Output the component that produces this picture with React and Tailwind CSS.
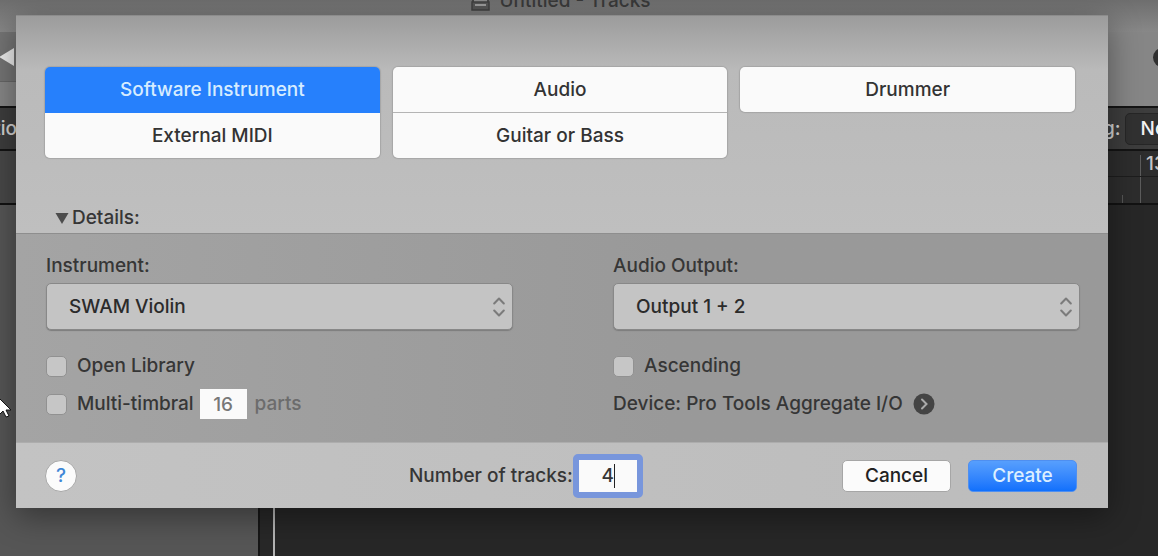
import { useState } from "react";

const trackTypes = [
  ["Software Instrument", "External MIDI"],
  ["Audio", "Guitar or Bass"],
  ["Drummer"],
];

function TypeButton({ label, selected, first, last, onSelect }) {
  const tone = selected
    ? "bg-[#2680fc] text-[#d6ecff]"
    : "bg-[#fafafa] text-[#333333]";
  const height = first && !last ? "h-[46px]" : "h-[45px]";
  const edge = `${first ? "rounded-t-[5px]" : ""} ${last ? "rounded-b-[5px]" : ""} ${
    first && !last && !selected ? "border-b border-[#b4b4b4]" : ""
  }`;
  return (
    <button
      type="button"
      aria-pressed={selected}
      onClick={onSelect}
      className={`block w-full ${height} ${tone} ${edge}`}
    >
      {label}
    </button>
  );
}

function Popup({ id, label, value }) {
  return (
    <div className="flex flex-col">
      <label htmlFor={id} className="h-6 leading-6">
        {label}
      </label>
      <div className="relative mt-[5px]">
        <select
          id={id}
          defaultValue={value}
          className="h-[47px] w-full appearance-none rounded-[5px] border border-[#888888] bg-[#c4c4c4] px-[22px] text-[#2b2b2b] shadow-[0_1px_1px_#7d7d7d] outline-none"
        >
          <option>{value}</option>
        </select>
        <svg
          className="pointer-events-none absolute right-2 top-[14px] h-5 w-3"
          viewBox="0 0 12 20"
          fill="none"
          stroke="#7b7b7b"
          strokeWidth="2"
          strokeLinecap="round"
          strokeLinejoin="round"
        >
          <path d="M1.2 6.5 6 1.5l4.800 5M1.200 13.500 6 18.500l4.800-5" />
        </svg>
      </div>
    </div>
  );
}

function Check({ id, label }) {
  return (
    <div className="flex items-center">
      <input
        id={id}
        type="checkbox"
        className="h-[21px] w-[21px] appearance-none rounded-[5px] border border-[#919191] bg-[#c6c6c6] checked:bg-[#2680fc]"
      />
      <label htmlFor={id} className="ml-[10px]">
        {label}
      </label>
    </div>
  );
}

function Backdrop() {
  return (
    <div aria-hidden="true" className="absolute inset-0 flex flex-col overflow-hidden whitespace-nowrap">
      <div className="flex h-8 shrink-0 justify-center bg-linear-to-b from-[#6e6e6e] to-[#888888] pr-9">
        <div className="-mt-[11px] flex h-6 items-center gap-[9px] leading-6 text-[#393939]">
          <svg className="h-[20px] w-[19px]" viewBox="0 0 19 20">
            <path d="M2 -2h15v14H2z" fill="#8a8a8a" stroke="#444" strokeWidth="2" />
            <path d="M1 11h17v8H1z" fill="#555" stroke="#404040" strokeWidth="1.500" />
            <path d="M4 14h11" stroke="#9a9a9a" strokeWidth="2" />
          </svg>
          <span>Untitled - Tracks</span>
        </div>
      </div>
      <div className="flex h-[74px] shrink-0 justify-between bg-[#868686]">
        <div className="flex h-[50px] w-8 items-center border-b border-[#666666] bg-[#747474]">
          <svg className="h-[18px] w-[14px]" viewBox="0 0 14 18">
            <path d="M14 0v18L-1 9z" fill="#ececec" />
          </svg>
        </div>
        <div className="w-[5px] overflow-hidden pt-4">
          <div className="h-[19px] w-[19px] rounded-full bg-[#303030]" />
        </div>
      </div>
      <div className="flex h-[45px] shrink-0 items-center justify-between border-y-2 border-[#141414] bg-[#3d3d3d] text-[#d2d2d2]">
        <div className="flex w-[17px] justify-end overflow-hidden">Functio</div>
        <div className="flex w-[55px] items-center overflow-hidden">
          <span>g:</span>
          <div className="ml-1 h-8 w-20 shrink-0 rounded-[5px] border border-[#262626] bg-[#313131] pl-[15px] leading-[30px] text-[#f2f2f2]">
            None
          </div>
        </div>
      </div>
      <div className="flex h-[54px] shrink-0 justify-between border-b-2 border-[#121212] bg-[#2d2d2d]">
        <div className="w-64 bg-[#484848]" />
        <div className="flex w-[50px] flex-col overflow-hidden">
          <div className="flex h-[26px] justify-end border-b border-[#1d1d1d]">
            <div className="mt-1 w-[18px] border-l border-[#5c5c5c] pl-[5px] leading-[18px] text-[#c4c4c4]">13</div>
          </div>
          <div className="flex flex-1 items-end justify-end">
            <div className="mr-[17px] h-2 w-px bg-[#555555]" />
            <div className="h-full w-[18px] border-l border-[#5c5c5c]" />
          </div>
        </div>
      </div>
      <div className="flex flex-1 bg-[#272727]">
        <div className="w-[258px] bg-[#565656]" />
        <div className="w-[15px] border-l-2 border-[#161616] bg-[#282828]" />
        <div className="w-[2px] bg-[#b4b4b4]" />
      </div>
    </div>
  );
}

export default function App() {
  const [selected, setSelected] = useState("Software Instrument");
  const [tracks, setTracks] = useState("4");

  return (
    <div className="relative min-h-screen overflow-hidden bg-[#272727] font-['Inter','Liberation_Sans',sans-serif] text-[19px] leading-6 font-medium">
      <Backdrop />
      <div className="relative pt-[15px] pr-[50px] pl-4">
        <form
          role="dialog"
          aria-label="New Tracks"
          onSubmit={(e) => e.preventDefault()}
          className="text-[#363636] shadow-[0_8px_30px_rgba(0,0,0,0.4)]"
        >
          <div className="flex flex-col border-t border-[#8c8c8c] bg-[#bfbfbf] bg-linear-to-b from-[#9c9c9c] via-[#bababa] via-25% to-[#bfbfbf] pt-[51px] pr-[33px] pb-[3px] pl-[29px]">
            <div className="grid grid-cols-3 items-start gap-[13px]">
              {trackTypes.map((column) => (
                <div key={column[0]} className="rounded-[5px] shadow-[0_0_1px_1px_#a6a6a6]">
                  {column.map((label, i) => (
                    <TypeButton
                      key={label}
                      label={label}
                      selected={selected === label}
                      first={i === 0}
                      last={i === column.length - 1}
                      onSelect={() => setSelected(label)}
                    />
                  ))}
                </div>
              ))}
            </div>
            <button type="button" aria-expanded="true" className="mt-12 ml-[10px] flex items-center gap-[3px] self-start">
              <svg className="h-[11px] w-[14px]" viewBox="0 0 14 11">
                <path d="M.5 0h13L7 11z" fill="#4d4d4d" />
              </svg>
              Details:
            </button>
          </div>

          <div className="grid grid-cols-2 gap-[100px] border-t border-[#8e8e8e] bg-linear-to-r from-[#a4a4a4] to-[#999999] to-60% pt-5 pr-7 pb-[23px] pl-[30px]">
            <div>
              <Popup id="instrument" label="Instrument:" value="SWAM Violin" />
              <div className="mt-[21px] flex h-[30px] items-center">
                <Check id="library" label="Open Library" />
              </div>
              <div className="mt-2 flex h-[30px] items-center">
                <Check id="multi" label="Multi-timbral" />
                <input
                  id="parts"
                  defaultValue="16"
                  className="ml-[6px] h-[30px] w-[47px] bg-[#fafafa] text-center text-[#777777] outline-none"
                />
                <label htmlFor="parts" className="ml-2 text-[#6c6c6c]">
                  parts
                </label>
              </div>
            </div>
            <div>
              <Popup id="output" label="Audio Output:" value="Output 1 + 2" />
              <div className="mt-[21px] flex h-[30px] items-center">
                <Check id="ascending" label="Ascending" />
              </div>
              <div className="mt-2 flex h-[30px] items-center whitespace-nowrap">
                <span>Device: Pro Tools Aggregate I/O</span>
                <button type="button" aria-label="Device settings" className="ml-[10px]">
                  <svg className="h-[22px] w-[22px]" viewBox="0 0 22 22">
                    <circle cx="11" cy="11" r="10.500" fill="#444" />
                    <path d="m9 6.500 4.500 4.500L9 15.500" fill="none" stroke="#aaa" strokeWidth="2" strokeLinecap="round" />
                  </svg>
                </button>
              </div>
            </div>
          </div>

          <div className="flex h-[66px] items-center border-t border-[#adadad] bg-linear-to-r from-[#c3c3c3] to-[#bcbcbc] pr-[31px] pl-[29px]">
            <button
              type="button"
              className="h-8 w-8 rounded-full border border-[#a8a8a8] bg-[#fbfbfb] leading-[30px] text-[#3f86d6]"
            >
              ?
            </button>
            <div className="grow-[5]" />
            <label htmlFor="tracks">Number of tracks:</label>
            <div className="relative">
              <input
                id="tracks"
                value={tracks}
                onChange={(e) => setTracks(e.target.value)}
                className="block h-[44px] w-[70px] rounded-[5px] border-6 border-[#7896dc] bg-[#fafafa] text-center caret-transparent outline-none"
              />
              <span className="absolute top-[10px] left-[41px] h-6 w-px bg-[#222222]" />
            </div>
            <div className="grow-[3]" />
            <button
              type="button"
              className="h-8 w-[109px] rounded-[5px] border border-[#a6a6a6] bg-[#fbfbfb] text-[#222222]"
            >
              Cancel
            </button>
            <button
              type="submit"
              className="ml-[17px] h-8 w-[109px] rounded-[5px] border border-[#4f8ff0] bg-linear-to-b from-[#579ffd] to-[#1070fc] text-[#dcefff]"
            >
              Create
            </button>
          </div>
        </form>
      </div>
      <svg aria-hidden="true" className="pointer-events-none absolute top-[396px] left-0 h-[22px] w-3" viewBox="0 0 12 22">
        <path d="M-2 1 11 14H6l3 6-3 1-3-6-5 5z" fill="#fff" stroke="#111" strokeWidth="1" />
      </svg>
    </div>
  );
}
